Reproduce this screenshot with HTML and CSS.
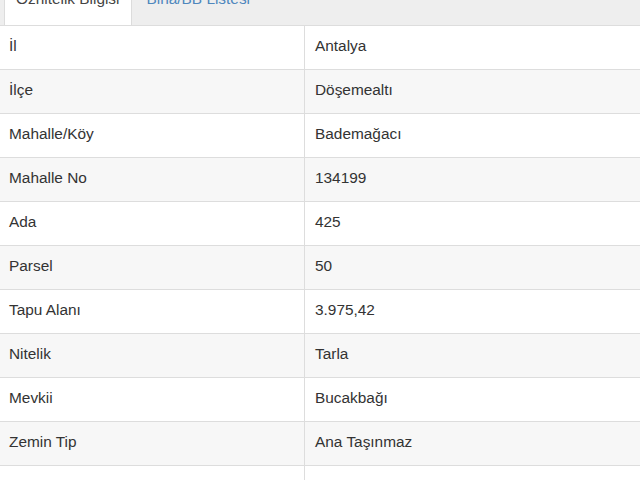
FILE: index.html
```html
<!DOCTYPE html>
<html lang="tr">
<head>
    <meta charset="UTF-8">
    <title>Parsel Bilgisi</title>
    <link rel="stylesheet" href="styles.css">
</head>
<body>
    <div class="tab-bar">
        <div class="tab active">Öznitelik Bilgisi</div>
        <div class="tab">Bina/BB Listesi</div>
    </div>

    <div class="attr-table">
        <div class="row"><div class="cell">İl</div><div class="cell">Antalya</div></div>
        <div class="row"><div class="cell">İlçe</div><div class="cell">Döşemealtı</div></div>
        <div class="row"><div class="cell">Mahalle/Köy</div><div class="cell">Bademağacı</div></div>
        <div class="row"><div class="cell">Mahalle No</div><div class="cell">134199</div></div>
        <div class="row"><div class="cell">Ada</div><div class="cell">425</div></div>
        <div class="row"><div class="cell">Parsel</div><div class="cell">50</div></div>
        <div class="row"><div class="cell">Tapu Alanı</div><div class="cell">3.975,42</div></div>
        <div class="row"><div class="cell">Nitelik</div><div class="cell">Tarla</div></div>
        <div class="row"><div class="cell">Mevkii</div><div class="cell">Bucakbağı</div></div>
        <div class="row"><div class="cell">Zemin Tip</div><div class="cell">Ana Taşınmaz</div></div>
        <div class="row"><div class="cell">Pafta</div><div class="cell">O25-B-13-D-4A</div></div>
    </div>
</body>
</html>
```

FILE: styles.css
```css
body {
    margin: 0;
    font-family: 'Liberation Sans', Arial, sans-serif;
    font-size: 15.4px;
    color: #333;
    background: #fff;
    overflow: hidden;
}
.tab-bar {
    display: flex;
    height: 25px;
    padding-left: 4px;
    background: #eeeeee;
    overflow: hidden;
}
.tab {
    margin-top: -20px;
    margin-right: 3px;
    padding: 8px 11px 16px;
    line-height: 20px;
    color: #4f87bd;
    border: 1px solid transparent;
    border-bottom: none;
}
.tab.active {
    color: #444;
    background: #fff;
    border-color: #dcdcdc;
}
.attr-table {
    display: flex;
    flex-direction: column;
}
.row {
    display: grid;
    grid-template-columns: 304px 1fr;
    border-top: 1px solid #dddddd;
}
.row:nth-child(even) {
    background: #f7f7f7;
}
.cell {
    padding: 0 9px 3px;
    line-height: 40px;
    white-space: nowrap;
}
.cell + .cell {
    padding-left: 10px;
    border-left: 1px solid #dddddd;
}
```
